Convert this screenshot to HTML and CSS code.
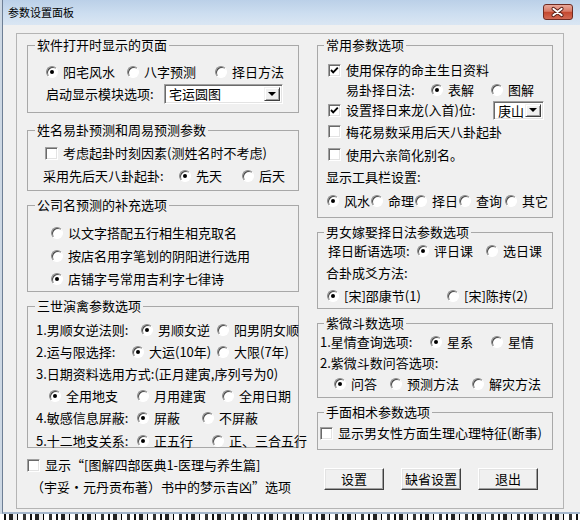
FILE: index.html
```html
<!DOCTYPE html>
<html lang="zh-CN">
<head>
<meta charset="utf-8">
<title>参数设置面板</title>
<link rel="stylesheet" href="styles.css">
</head>
<body>
<div class="window">
  <div class="titlebar">
    <span class="title">参数设置面板</span>
    <div class="close">
      <svg width="30" height="14" viewBox="0 0 30 14">
        <path d="M10 3.5 L19 10.5 M19 3.5 L10 10.5" stroke="#5a2018" stroke-width="4" stroke-linecap="round"/>
        <path d="M10 3.5 L19 10.5 M19 3.5 L10 10.5" stroke="#fff" stroke-width="2" stroke-linecap="round"/>
      </svg>
    </div>
  </div>
  <div class="client">
    <div class="panel">
      <div class="col col-left">
        <fieldset class="group g1">
          <legend>软件打开时显示的页面</legend>
          <div class="row grid mt8 pl18 gc-81-88">
            <label class="opt"><span class="radio on"></span>阳宅风水</label>
            <label class="opt"><span class="radio"></span>八字预测</label>
            <label class="opt"><span class="radio"></span>择日方法</label>
          </div>
          <div class="row grid pl18 gc-118-119">
            <span>启动显示模块选项:</span>
            <div class="combo"><span class="combo-text">宅运圆图</span><span class="drop"></span></div>
          </div>
        </fieldset>

        <fieldset class="group g2">
          <legend>姓名易卦预测和周易预测参数</legend>
          <div class="row mt4 pl17">
            <label class="opt"><span class="check"></span>考虑起卦时刻因素(测姓名时不考虑)</label>
          </div>
          <div class="row grid mt1 pl15 gc-136-63">
            <span>采用先后天八卦起卦:</span>
            <label class="opt"><span class="radio on"></span>先天</label>
            <label class="opt"><span class="radio"></span>后天</label>
          </div>
        </fieldset>

        <fieldset class="group g3">
          <legend>公司名预测的补充选项</legend>
          <div class="row h23 mt8 pl23">
            <label class="opt"><span class="radio"></span>以文字搭配五行相生相克取名</label>
          </div>
          <div class="row h23 pl23">
            <label class="opt"><span class="radio"></span>按店名用字笔划的阴阳进行选用</label>
          </div>
          <div class="row h23 pl23">
            <label class="opt"><span class="radio on"></span>店铺字号常用吉利字七律诗</label>
          </div>
        </fieldset>

        <fieldset class="group g4">
          <legend>三世演禽参数选项</legend>
          <div class="row grid mt5 pl8 gc-105-76">
            <span>1.男顺女逆法则:</span>
            <label class="opt"><span class="radio on"></span>男顺女逆</label>
            <label class="opt"><span class="radio"></span>阳男阴女顺</label>
          </div>
          <div class="row grid pl8 gc-96-85">
            <span>2.运与限选择:</span>
            <label class="opt"><span class="radio on"></span>大运(10年)</label>
            <label class="opt"><span class="radio"></span>大限(7年)</label>
          </div>
          <div class="row pl8">
            <span>3.日期资料选用方式:(正月建寅,序列号为0)</span>
          </div>
          <div class="row grid pl21 gc-88-85">
            <label class="opt"><span class="radio on"></span>全用地支</label>
            <label class="opt"><span class="radio"></span>月用建寅</label>
            <label class="opt"><span class="radio"></span>全用日期</label>
          </div>
          <div class="row grid pl8 gc-101-65">
            <span>4.敏感信息屏蔽:</span>
            <label class="opt"><span class="radio on"></span>屏蔽</label>
            <label class="opt"><span class="radio"></span>不屏蔽</label>
          </div>
          <div class="row grid h14 mt4 pl8 gc-101-75">
            <span>5.十二地支关系:</span>
            <label class="opt"><span class="radio on"></span>正五行</label>
            <label class="opt"><span class="radio"></span>正、三合五行</label>
          </div>
        </fieldset>

        <div class="row mt6">
          <label class="opt"><span class="check"></span>显示“[图解四部医典1-医理与养生篇]</label>
        </div>
        <div class="row pl4">
          <span>（宇妥<span class="dot">·</span>元丹贡布著）书中的梦示吉凶”选项</span>
        </div>
      </div>

      <div class="col col-right">
        <fieldset class="group r1">
          <legend>常用参数选项</legend>
          <div class="row h20 mt7 pl10">
            <label class="opt"><span class="check"><svg viewBox="0 0 11 11"><path d="M2 5 L4.2 7.3 L8.8 2.6" stroke="#000" stroke-width="1.9" fill="none"/></svg></span>使用保存的命主生日资料</label>
          </div>
          <div class="row grid h20 pl28 gc-85-60">
            <span>易卦择日法:</span>
            <label class="opt"><span class="radio on"></span>表解</label>
            <label class="opt"><span class="radio"></span>图解</label>
          </div>
          <div class="row grid h20 pl10 gc-165-51">
            <label class="opt"><span class="check"><svg viewBox="0 0 11 11"><path d="M2 5 L4.2 7.3 L8.8 2.6" stroke="#000" stroke-width="1.9" fill="none"/></svg></span>设置择日来龙(入首)位:</label>
            <div class="combo small"><span class="combo-text">庚山</span><span class="drop"></span></div>
          </div>
          <div class="row h23 pl10">
            <label class="opt"><span class="check"></span>梅花易数采用后天八卦起卦</label>
          </div>
          <div class="row h23 pl10">
            <label class="opt"><span class="check"></span>使用六亲简化别名。</label>
          </div>
          <div class="row pl8">
            <span>显示工具栏设置:</span>
          </div>
          <div class="row grid h26 pl9 gc-tools">
            <label class="opt"><span class="radio on"></span>风水</label>
            <label class="opt"><span class="radio"></span>命理</label>
            <label class="opt"><span class="radio"></span>择日</label>
            <label class="opt"><span class="radio"></span>查询</label>
            <label class="opt"><span class="radio"></span>其它</label>
          </div>
        </fieldset>

        <fieldset class="group r2">
          <legend>男女嫁娶择日法参数选项</legend>
          <div class="row grid pl10 gc-89-69">
            <span>择日断语选项:</span>
            <label class="opt"><span class="radio on"></span>评日课</label>
            <label class="opt"><span class="radio"></span>选日课</label>
          </div>
          <div class="row pl8">
            <span>合卦成爻方法:</span>
          </div>
          <div class="row grid h23 pl9 gc-120">
            <label class="opt"><span class="radio on"></span>[宋]邵康节(1)</label>
            <label class="opt"><span class="radio"></span>[宋]陈抟(2)</label>
          </div>
        </fieldset>

        <fieldset class="group r3">
          <legend>紫微斗数选项</legend>
          <div class="row grid pl2 gc-110-61">
            <span>1.星情查询选项:</span>
            <label class="opt"><span class="radio on"></span>星系</label>
            <label class="opt"><span class="radio"></span>星情</label>
          </div>
          <div class="row h20 pl2">
            <span>2.紫微斗数问答选项:</span>
          </div>
          <div class="row grid pl16 gc-56-82">
            <label class="opt"><span class="radio on"></span>问答</label>
            <label class="opt"><span class="radio"></span>预测方法</label>
            <label class="opt"><span class="radio"></span>解灾方法</label>
          </div>
        </fieldset>

        <fieldset class="group r4">
          <legend>手面相术参数选项</legend>
          <div class="row mt2 pl2">
            <label class="opt"><span class="check"></span>显示男女性方面生理心理特征(断事)</label>
          </div>
        </fieldset>

        <div class="buttons">
          <button class="btn">设置</button>
          <button class="btn">缺省设置</button>
          <button class="btn">退出</button>
        </div>
      </div>
    </div>
  </div>
</div>
<div class="desktop"></div>
</body>
</html>
```

FILE: styles.css
```css
* { box-sizing: border-box; }
html, body { margin: 0; }
body {
  width: 580px;
  height: 520px;
  overflow: hidden;
  background: #cdd8e4;
  font-family: "Noto Sans CJK SC", "Noto Sans", sans-serif;
  font-size: 13px;
  line-height: 16px;
  color: #000;
}

.window {
  margin-left: 2px;
  width: 578px;
  height: 514px;
  border-left: 1px solid #6e7f95;
  border-bottom: 2px solid #a5b7cc;
  background: #f0f0f0;
  display: flex;
  flex-direction: column;
}

.titlebar {
  height: 25px;
  flex: none;
  display: flex;
  justify-content: space-between;
  align-items: flex-start;
  padding-left: 5px;
  background: linear-gradient(#bbd0e8, #cddef0 55%, #dae6f3);
}
.title { font-size: 11px; line-height: 15px; margin-top: 5px; }
.close {
  width: 30px;
  height: 16px;
  margin: 4px 7px 0 0;
  border: 1px solid #6f2b22;
  border-radius: 3px;
  background: linear-gradient(#eaa99a, #d87a67 45%, #c4482f 52%, #d26a55);
  display: flex;
  align-items: center;
  justify-content: center;
}
.close svg { display: block; }

.client { flex: 1; padding: 8px 0 0 13px; }
.panel {
  width: 548px;
  height: 476px;
  border: 1px solid #b4b4b4;
  display: flex;
  gap: 18px;
  padding: 3px 0 0 10px;
}
.col { flex: none; }
.col-left { width: 272px; }
.col-right { width: 236px; }

.group {
  margin: 0;
  padding: 0;
  min-width: 0;
  border: 1px solid #a8a8a8;
}
.group legend { margin-left: 7px; padding: 0 2px; line-height: 16px; }
.col-right .group legend { margin-left: 6px; }

.g1 { padding-bottom: 7px; }
.g2 { margin-top: 9px; padding-bottom: 3px; }
.g3 { margin-top: 6px; padding-bottom: 1px; }
.g4 { margin-top: 6px; }
.r1 { padding-bottom: 3px; }
.r2 { margin-top: 6px; padding-bottom: 1px; }
.r3 { margin-top: 6px; padding-bottom: 2px; }
.r4 { margin-top: 6px; padding-bottom: 5px; }

.row {
  display: flex;
  align-items: center;
  height: 22px;
  white-space: nowrap;
}
.grid {
  display: grid;
  grid-auto-flow: column;
  align-items: center;
  justify-content: start;
}
.h14 { height: 14px; }
.h20 { height: 20px; }
.h23 { height: 23px; }
.h26 { height: 26px; }
.mt1 { margin-top: 1px; }
.mt2 { margin-top: 2px; }
.mt4 { margin-top: 4px; }
.mt5 { margin-top: 5px; }
.mt6 { margin-top: 6px; }
.mt7 { margin-top: 7px; }
.mt8 { margin-top: 8px; }
.pl2 { padding-left: 2px; }
.pl4 { padding-left: 4px; }
.pl8 { padding-left: 8px; }
.pl9 { padding-left: 9px; }
.pl10 { padding-left: 10px; }
.pl15 { padding-left: 15px; }
.pl16 { padding-left: 16px; }
.pl17 { padding-left: 17px; }
.pl18 { padding-left: 18px; }
.pl21 { padding-left: 21px; }
.pl23 { padding-left: 23px; }
.pl28 { padding-left: 28px; }

.gc-81-88 { grid-template-columns: 81px 88px auto; }
.gc-118-119 { grid-template-columns: 118px 119px; }
.gc-136-63 { grid-template-columns: 136px 63px auto; }
.gc-105-76 { grid-template-columns: 105px 76px auto; }
.gc-96-85 { grid-template-columns: 96px 85px auto; }
.gc-88-85 { grid-template-columns: 88px 85px auto; }
.gc-101-65 { grid-template-columns: 101px 65px auto; }
.gc-101-75 { grid-template-columns: 101px 75px auto; }
.gc-85-60 { grid-template-columns: 85px 60px auto; }
.gc-165-51 { grid-template-columns: 165px 51px; }
.gc-tools { grid-template-columns: 44px 44px 44px 46px auto; }
.gc-89-69 { grid-template-columns: 89px 69px auto; }
.gc-120 { grid-template-columns: 120px auto; }
.gc-110-61 { grid-template-columns: 110px 61px auto; }
.gc-56-82 { grid-template-columns: 56px 82px auto; }

.opt { display: flex; align-items: center; }

.radio {
  position: relative;
  flex: none;
  width: 12px;
  height: 12px;
  margin-right: 5px;
  border-radius: 50%;
  border: 1px solid;
  border-color: #8a8a8a #ffffff #ffffff #8a8a8a;
  background: #fff;
  box-shadow: inset 1px 1px 0 #4a4a4a;
}
.radio.on::after {
  content: "";
  position: absolute;
  left: 3px;
  top: 3px;
  width: 4px;
  height: 4px;
  border-radius: 50%;
  background: #000;
}

.check {
  flex: none;
  width: 13px;
  height: 13px;
  margin-right: 5px;
  background: #fff;
  border: 1px solid;
  border-color: #a0a0a0 #fff #fff #a0a0a0;
  box-shadow: inset 1px 1px 0 #6a6a6a, inset -1px -1px 0 #e3e3e3;
  display: flex;
  align-items: center;
  justify-content: center;
}
.check svg { width: 11px; height: 11px; display: block; }

.combo {
  height: 20px;
  display: flex;
  align-items: stretch;
  padding: 1px 2px 1px 1px;
  background: #fff;
  border: 1px solid;
  border-color: #a0a0a0 #fff #fff #a0a0a0;
  box-shadow: inset 1px 1px 0 #6a6a6a, inset -1px -1px 0 #e3e3e3;
}
.combo.small { height: 19px; }
.combo-text { flex: 1; padding-left: 3px; line-height: 16px; }
.drop {
  width: 16px;
  flex: none;
  margin: 1px 0;
  background: #f0f0f0;
  border: 1px solid;
  border-color: #f0f0f0 #404040 #404040 #f0f0f0;
  box-shadow: inset 1px 1px 0 #fff, inset -1px -1px 0 #a0a0a0;
  display: flex;
  align-items: center;
  justify-content: center;
}
.drop::before {
  content: "";
  border-left: 4px solid transparent;
  border-right: 4px solid transparent;
  border-top: 4px solid #000;
}

.dot { display: inline-block; width: 13px; text-align: center; }

.buttons { display: flex; gap: 17px; margin-top: 18px; padding-left: 7px; }
.btn {
  width: 60px;
  height: 22px;
  padding: 0;
  font: inherit;
  color: #000;
  background: #f0f0f0;
  border: 1px solid;
  border-color: #fff #404040 #404040 #fff;
  box-shadow: inset -1px -1px 0 #a0a0a0, inset 1px 1px 0 #e3e3e3;
}

.desktop {
  height: 6px;
  background: repeating-linear-gradient(90deg, #fff 0 4px, #111 4px 6px, #fff 6px 9px, #222 9px 13px, #eee 13px 17px, #000 17px 18px, #fff 18px 23px, #333 23px 26px);
}
```
